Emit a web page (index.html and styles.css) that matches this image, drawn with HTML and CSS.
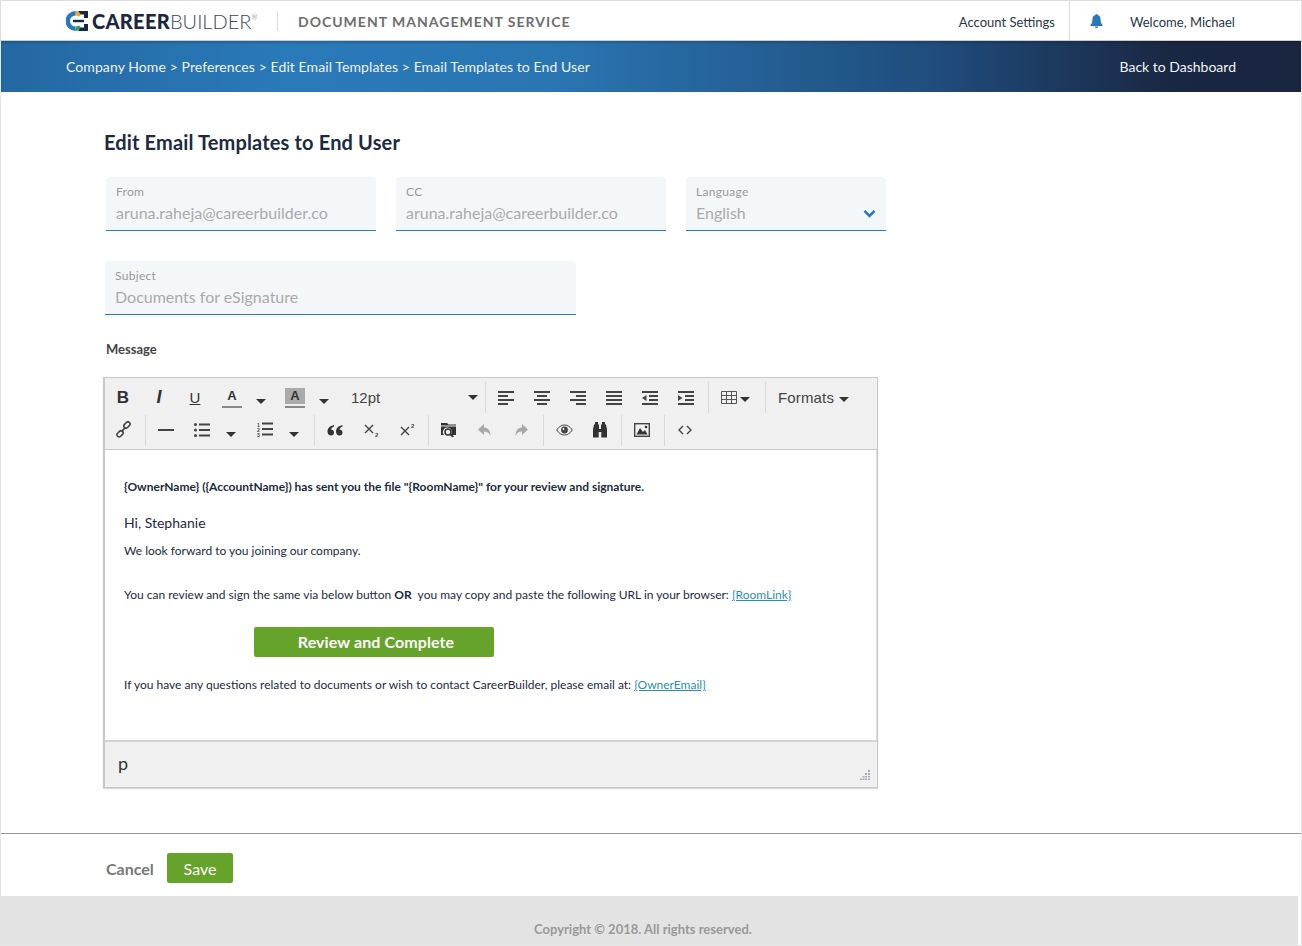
FILE: index.html
```html
<!DOCTYPE html>
<html lang="en">
<head>
  <meta charset="UTF-8" />
  <meta name="viewport" content="width=device-width, initial-scale=1.0"/>
  <title>Edit Email Templates to End User</title>
  <link rel="stylesheet" href="styles.css">
</head>
<body>
  <div class="page">
    <header class="topbar">
      <div class="logo">
        <svg class="logo-mark" width="22" height="20" viewBox="0 0 22 20">
          <path d="M9.500 0A10 10 0 0 1 16 2.500L13 5.500A5.500 5.500 0 0 0 9.500 4.500Z" fill="#f0a030"/>
          <path d="M9.500 0A10 10 0 0 0 9.500 20V15.500A5.500 5.500 0 0 1 9.500 4.500Z" fill="#2b78b8"/>
          <path d="M9.500 20A10 10 0 0 0 16 17.500L13 14.500A5.500 5.500 0 0 1 9.500 15.500Z" fill="#2f9c6b"/>
          <path d="M12 0H22V7H18V3.500H15ZM12 20H22V13H18V16.500H15Z" fill="#1a2740"/>
          <rect x="7" y="8.800" width="11" height="2.400" fill="#1a2740"/>
        </svg>
        <span class="logo-name"><b>CAREER</b>BUILDER<sup>®</sup></span>
      </div>
      <div class="service">DOCUMENT MANAGEMENT SERVICE</div>
      <a class="account" href="#">Account Settings</a>
      <div class="user">
        <svg class="bell" width="13" height="14" viewBox="0 0 13 14"><path d="M6.500 0a1 1 0 0 1 1 1.100C9.600 1.500 10.600 3.300 10.600 5.500c0 3 .8 4.300 2 5.500v.9H.4V11c1.200-1.200 2-2.500 2-5.500 0-2.200 1-4 3.100-4.400A1 1 0 0 1 6.500 0ZM4.800 12.500h3.400a1.700 1.500 0 0 1-3.400 0Z" fill="#2b78b8"/></svg>
        <span>Welcome, Michael</span>
      </div>
    </header>

    <nav class="crumbs">
      <div class="trail">Company Home &gt; Preferences &gt; Edit Email Templates &gt; Email Templates to End User</div>
      <a href="#">Back to Dashboard</a>
    </nav>

    <main class="content">
      <h1>Edit Email Templates to End User</h1>

      <div class="field-row">
        <div class="field field-from"><label>From</label><div class="value">aruna.raheja@careerbuilder.co</div></div>
        <div class="field field-from"><label>CC</label><div class="value">aruna.raheja@careerbuilder.co</div></div>
        <div class="field field-lang">
          <label>Language</label><div class="value">English</div>
          <svg class="chevron" width="13" height="9" viewBox="0 0 13 9"><path d="M1.500 1.800 6.500 6.800 11.500 1.800" fill="none" stroke="#2b78b8" stroke-width="2.600"/></svg>
        </div>
      </div>

      <div class="field field-subject"><label>Subject</label><div class="value">Documents for eSignature</div></div>

      <div class="message-label">Message</div>

      <div class="editor">
        <div class="toolbar">
          <div class="tool-row">
            <span class="tool tool-b">B</span>
            <span class="tool tool-i">I</span>
            <span class="tool tool-u">U</span>
            <span class="tool tool-color"><span class="color-a">A</span></span>
            <span class="tool-caret"><i class="caret"></i></span>
            <span class="tool tool-shift"><span class="color-a color-bg">A</span></span>
            <span class="tool-caret"><i class="caret"></i></span>
            <span class="font-size">12pt<i class="caret"></i></span>
            <i class="sep sep-font"></i>
            <span class="tool"><svg width="16" height="14" viewBox="0 0 16 14"><path d="M0 0h16v2H0zM0 4h10v2H0zM0 8h16v2H0zM0 12h10v2H0z" fill="#444"/></svg></span>
            <span class="tool"><svg width="16" height="14" viewBox="0 0 16 14"><path d="M0 0h16v2H0zM3 4h10v2H3zM0 8h16v2H0zM3 12h10v2H3z" fill="#444"/></svg></span>
            <span class="tool"><svg width="16" height="14" viewBox="0 0 16 14"><path d="M0 0h16v2H0zM6 4h10v2H6zM0 8h16v2H0zM6 12h10v2H6z" fill="#444"/></svg></span>
            <span class="tool"><svg width="16" height="14" viewBox="0 0 16 14"><path d="M0 0h16v2H0zM0 4h16v2H0zM0 8h16v2H0zM0 12h16v2H0z" fill="#444"/></svg></span>
            <span class="tool"><svg width="16" height="14" viewBox="0 0 16 14"><path d="M0 0h16v2H0zM7 4h9v2H7zM7 8h9v2H7zM0 12h16v2H0zM4.500 4v6L0 7Z" fill="#444"/></svg></span>
            <span class="tool"><svg width="16" height="14" viewBox="0 0 16 14"><path d="M0 0h16v2H0zM7 4h9v2H7zM7 8h9v2H7zM0 12h16v2H0zM0 4v6l4.500-3Z" fill="#444"/></svg></span>
            <i class="sep sep-table"></i>
            <span class="tool-table"><svg width="16" height="13" viewBox="0 0 16 13"><path d="M.5.500h15v12H.5zM.5 4.500h15M.5 8.500h15M5.500.500v12M10.500.500v12" fill="none" stroke="#555"/></svg><i class="caret"></i></span>
            <i class="sep"></i>
            <span class="formats">Formats<i class="caret"></i></span>
          </div>
          <div class="tool-row tool-row-low">
            <span class="tool"><svg width="17" height="17" viewBox="0 0 16 16"><g fill="none" stroke="#444" stroke-width="1.500"><rect x="8" y="1.800" width="6.500" height="4" rx="2" transform="rotate(-45 11.200 3.800)"/><rect x="1.500" y="10" width="6.500" height="4" rx="2" transform="rotate(-45 4.800 12)"/><path d="M6 10l4-4"/></g></svg></span>
            <i class="sep sep-low sep-link"></i>
            <span class="tool"><svg width="16" height="14" viewBox="0 0 16 14"><path d="M0 6h16v2H0z" fill="#444"/></svg></span>
            <span class="tool"><svg width="16" height="14" viewBox="0 0 16 14"><circle cx="1.500" cy="1.500" r="1.500" fill="#444"/><circle cx="1.500" cy="7" r="1.500" fill="#444"/><circle cx="1.500" cy="12.500" r="1.500" fill="#444"/><path d="M5 .500h11v2H5zM5 6h11v2H5zM5 11.500h11v2H5z" fill="#444"/></svg></span>
            <span class="tool-caret"><i class="caret"></i></span>
            <span class="tool tool-shift"><svg width="16" height="15" viewBox="0 0 16 15"><path d="M5 .500h11v2H5zM5 6h11v2H5zM5 11.500h11v2H5z" fill="#444"/><text class="ol-num" x="0" y="4.500">1</text><text class="ol-num" x="0" y="9.500">2</text><text class="ol-num" x="0" y="14.500">3</text></svg></span>
            <span class="tool-caret"><i class="caret"></i></span>
            <i class="sep sep-low sep-list"></i>
            <span class="tool"><svg width="16" height="12" viewBox="0 0 16 12"><path d="M7 1C3 2 .500 4 .500 7.500.500 10 2 11.500 4 11.500s3-1.400 3-3.100C7 6.500 5.500 5.500 4 5.500 4.300 4.200 5.500 3 7 2.500ZM15.500 1c-4 1-6.500 3-6.500 6.500C9 10 10.500 11.500 12.500 11.500s3-1.400 3-3.100c0-1.900-1.500-2.900-3-2.900.300-1.300 1.500-2.500 3-3Z" fill="#333"/></svg></span>
            <span class="tool"><svg width="15" height="14" viewBox="0 0 15 14"><path d="M1 2l8 8M9 2l-8 8" stroke="#444" stroke-width="1.400" fill="none"/><text class="script-num" x="11" y="14">2</text></svg></span>
            <span class="tool"><svg width="15" height="14" viewBox="0 0 15 14"><path d="M1 4l8 8M9 4l-8 8" stroke="#444" stroke-width="1.400" fill="none"/><text class="script-num" x="11" y="5">2</text></svg></span>
            <i class="sep sep-low"></i>
            <span class="tool"><svg width="16" height="15" viewBox="0 0 16 15"><path d="M0 3.500V1h6l1.500 1.500H15v1Z M0 4.500h15V13H9.800a4.500 4.500 0 0 0-3-7.500A4.500 4.500 0 0 0 3 13H0Z" fill="#333"/><circle cx="7" cy="10" r="3" fill="none" stroke="#333" stroke-width="1.500"/><path d="M9.200 12l3 3" stroke="#333" stroke-width="2"/></svg></span>
            <span class="tool"><svg width="14" height="14" viewBox="0 0 14 14"><path d="M6 1 0 6.500 6 12V8.500c3 0 5 1 6.500 4.500 0-5-2-8-6.500-8.500Z" fill="#a8a8a8"/></svg></span>
            <span class="tool"><svg width="14" height="14" viewBox="0 0 14 14"><path d="M8 1l6 5.500L8 12V8.500c-3 0-5 1-6.500 4.500 0-5 2-8 6.500-8.500Z" fill="#a8a8a8"/></svg></span>
            <i class="sep sep-low sep-wide"></i>
            <span class="tool"><svg width="17" height="12" viewBox="0 0 17 12"><path d="M.7 6C3 2.500 5.500 1 8.500 1s5.500 1.500 7.800 5c-2.300 3.500-4.800 5-7.800 5S3 9.500.7 6Z" fill="none" stroke="#444"/><circle cx="8.500" cy="6" r="3.400" fill="#444"/><circle cx="7.500" cy="5" r="1" fill="#efefef"/></svg></span>
            <span class="tool"><svg width="16" height="16" viewBox="0 0 16 16"><path d="M3 0h3v2.500h1V7h2V2.500h1V0h3v2.500h1l1 5V15.500H9.300V10H6.700v5.500H1V7.500l1-5h1Z" fill="#333"/></svg></span>
            <i class="sep sep-low"></i>
            <span class="tool"><svg width="16" height="14" viewBox="0 0 16 14"><rect x=".7" y=".7" width="14.600" height="12.600" fill="none" stroke="#444" stroke-width="1.400"/><path d="M2.500 11.500 6 5l3 4 2-2 2.500 4.500Z" fill="#333"/><circle cx="12" cy="4" r="1.300" fill="#333"/></svg></span>
            <i class="sep sep-low sep-wide"></i>
            <span class="tool"><svg width="14" height="10" viewBox="0 0 14 10"><path d="M5 1 1 5l4 4M9 1l4 4-4 4" fill="none" stroke="#444" stroke-width="1.400"/></svg></span>
          </div>
        </div>

        <div class="editor-body">
          <p class="line-lead"><b>{OwnerName} ({AccountName}) has sent you the file "{RoomName}" for your review and signature.</b></p>
          <p class="line-hi">Hi, Stephanie</p>
          <p class="line-forward">We look forward to you joining our company.</p>
          <p class="line-review">You can review and sign the same via below button <span class="or">OR</span>&nbsp; you may copy and paste the following URL in your browser: <a href="#">{RoomLink}</a></p>
          <a class="review-btn" href="#">Review and Complete</a>
          <p class="line-contact">If you have any questions related to documents or wish to contact CareerBuilder, please email at: <a href="#">{OwnerEmail}</a></p>
        </div>

        <div class="statusbar">
          <span>p</span>
          <svg class="grip" width="10" height="10" viewBox="0 0 10 10"><path d="M8 0h2v2H8zM5 3h2v2H5zM8 3h2v2H8zM2.500 6h2v1.500h-2zM5 6h2v1.500H5zM8 6h2v1.500H8zM0 8.500h2V10H0zM2.500 8.500h2V10h-2zM5 8.500h2V10H5zM8 8.500h2V10H8z" fill="#aab"/></svg>
        </div>
      </div>
    </main>

    <div class="actions">
      <a class="cancel" href="#">Cancel</a>
      <a class="save" href="#">Save</a>
    </div>

    <footer class="copyright">Copyright © 2018. All rights reserved.</footer>
  </div>
</body>
</html>
```

FILE: styles.css
```css
* {
  margin: 0;
  padding: 0;
  box-sizing: border-box;
}

html, body {
  height: 946px;
  overflow: hidden;
}

body {
  background-color: #e6e6e6;
  font-family: "Lato", sans-serif;
  color: #1c2a44;
}

a {
  text-decoration: none;
  color: inherit;
}

.page {
  width: 1300px;
  height: 945px;
  background: #fff;
  margin-left: 1px;
}

/* top bar */
.topbar {
  display: flex;
  align-items: center;
  height: 41px;
  margin-left: -1px;
  border-top: 1px solid #ddd;
  border-left: 1px solid #ddd;
  border-bottom: 1px solid #ccc;
  background: #fff;
}

.logo {
  display: flex;
  align-items: center;
  width: 211px;
  height: 20px;
  margin-left: 65px;
}

.logo-mark {
  flex: none;
  margin-right: 4px;
}

.logo-name {
  font-size: 20px;
  font-weight: 300;
  color: #3d4656;
  white-space: nowrap;
}

.logo-name b {
  font-weight: 900;
  color: #1a2740;
  letter-spacing: 0.3px;
}

.logo-name sup {
  font-size: 7px;
  vertical-align: 9px;
  line-height: 0;
}

.service {
  height: 20px;
  line-height: 22px;
  padding-left: 20px;
  border-left: 1px solid #ddd;
  font-size: 14px;
  font-weight: 700;
  letter-spacing: 1px;
  color: #6e6e6e;
}

.account {
  margin-left: auto;
  margin-top: 2px;
  padding-right: 14px;
  font-size: 13px;
  color: #2a3549;
}

.user {
  display: flex;
  align-items: center;
  align-self: stretch;
  width: 232px;
  padding-left: 20px;
  border-left: 1px solid #ddd;
  font-size: 13px;
  color: #2a3549;
}

.user span {
  margin-top: 2px;
}

.bell {
  margin-right: 27px;
}

/* breadcrumb */
.crumbs {
  display: flex;
  justify-content: space-between;
  align-items: center;
  height: 51px;
  padding: 0 65px 0 65px;
  background: linear-gradient(90deg, #2468a2 0, #2a79b9 22%, #2a76b3 42%, #1f4c7c 72%, #1a2742 90%, #1a2540 100%);
  box-shadow: inset 0 2px 2px rgba(0, 0, 0, 0.15);
  font-size: 14px;
  color: #eef3f8;
}

.trail {
  letter-spacing: 0.09px;
}

/* form */
.content {
  padding: 0 0 0 103px;
  height: 741px;
}

h1 {
  padding-top: 38px;
  height: 85px;
  font-size: 20px;
  line-height: 24px;
  font-weight: 700;
  letter-spacing: 0.15px;
  color: #1c2a44;
}

.field-row {
  display: flex;
  gap: 20px;
  padding-left: 2px;
  margin-bottom: 30px;
}

.field {
  position: relative;
  height: 54px;
  padding: 8px 10px 0;
  background: #f4f7fa;
  border-bottom: 1px solid #2a7abf;
  border-radius: 3px 3px 0 0;
}

.field label {
  display: block;
  height: 14px;
  font-size: 12px;
  line-height: 14px;
  letter-spacing: 0.3px;
  color: #999;
}

.field .value {
  margin-top: 3px;
  font-size: 16px;
  line-height: 22px;
  color: #aaa;
}

.field-from {
  width: 270px;
}

.field-lang {
  width: 200px;
}

.field-subject {
  width: 471px;
  margin-left: 1px;
}

.chevron {
  position: absolute;
  right: 10px;
  top: 32px;
}

.message-label {
  margin: 26px 0 0 2px;
  height: 36px;
  font-size: 13px;
  line-height: 16px;
  font-weight: 700;
  color: #444;
}

/* editor */
.editor {
  width: 775px;
  margin-left: -1px;
  border: 1px solid #c8c8c8;
  box-shadow: 0 1px 1px rgba(0, 0, 0, 0.15);
  border-left-width: 2px;
  background: #fff;
}

.toolbar {
  height: 72px;
  padding-top: 3px;
  background: #f0f0f0;
  border-bottom: 1px solid #c8c8c8;
}

.tool-row {
  display: flex;
  align-items: center;
  height: 33px;
}

.tool {
  display: flex;
  align-items: center;
  justify-content: center;
  flex: none;
  width: 36px;
  height: 32px;
  font-family: "Liberation Sans", sans-serif;
  color: #333;
}

.tool-row-low .tool {
  padding-bottom: 2px;
}

.tool-b {
  font-size: 17px;
  font-weight: 700;
}

.tool-i {
  font-size: 18px;
  font-weight: 700;
  font-style: italic;
}

.tool-u {
  font-size: 15px;
  text-decoration: underline;
}

.tool-color {
  margin-left: 1px;
}

.tool-shift {
  margin-left: 5px;
}

.color-a {
  width: 20px;
  height: 20px;
  border-bottom: 2px solid #888;
  font-size: 13px;
  line-height: 16px;
  font-weight: 700;
  text-align: center;
}

.color-bg {
  background: linear-gradient(#aaa 0, #aaa 16px, transparent 16px);
}

.tool-caret {
  display: flex;
  justify-content: center;
  flex: none;
  width: 22px;
  padding-top: 7px;
}

.caret {
  display: inline-block;
  width: 0;
  height: 0;
  border-left: 5px solid transparent;
  border-right: 5px solid transparent;
  border-top: 5px solid #333;
}

.font-size {
  display: flex;
  align-items: center;
  justify-content: space-between;
  flex: none;
  width: 145px;
  margin-left: 5px;
  padding: 0 7px 0 11px;
  font-family: "Liberation Sans", sans-serif;
  font-size: 15px;
  color: #444;
}

.sep {
  flex: none;
  width: 1px;
  height: 31px;
  background: #d9d9d9;
}

.sep-font {
  margin-right: 2px;
}

.sep-table {
  margin-left: 4px;
}

.sep-low {
  margin: 0 2px 0 3px;
}

.sep-wide {
  margin-left: 4px;
}

.sep-link {
  margin-left: 4px;
}

.sep-list {
  margin-left: 9px;
}

.tool-table {
  display: flex;
  align-items: center;
  flex: none;
  width: 56px;
  padding-left: 12px;
}

.tool-table .caret {
  margin: 4px 0 0 3px;
}

.formats {
  display: flex;
  align-items: center;
  padding-left: 12px;
  font-family: "Liberation Sans", sans-serif;
  font-size: 15px;
  letter-spacing: 0.15px;
  color: #444;
}

.formats .caret {
  margin: 4px 0 0 5px;
}

.ol-num {
  font-family: "Liberation Sans", sans-serif;
  font-size: 5px;
  font-weight: 700;
  fill: #444;
}

.script-num {
  font-family: "Liberation Sans", sans-serif;
  font-size: 6px;
  font-weight: 700;
  fill: #444;
}

.editor-body {
  height: 290px;
  padding: 29px 19px 0;
  font-size: 12px;
  line-height: 16px;
  color: #1c2a44;
  border-right: 1px solid #ddd;
}

.editor-body p {
  white-space: nowrap;
}

.editor-body a:not(.review-btn) {
  color: #2b8fb0;
  text-decoration: underline;
}

.line-hi {
  margin-top: 19px;
  font-size: 14px;
  line-height: 18px;
}

.line-forward {
  margin-top: 11px;
}

.line-review {
  margin-top: 28px;
}

.or {
  font-weight: 700;
}

.review-btn {
  display: block;
  width: 240px;
  height: 30px;
  margin: 24px 0 20px 130px;
  padding-left: 4px;
  background: #65a32a;
  border-radius: 2px;
  font-size: 16px;
  line-height: 30px;
  font-weight: 700;
  letter-spacing: 0.1px;
  text-align: center;
  color: #fff;
}

.statusbar {
  position: relative;
  height: 47px;
  padding: 10px 13px 0;
  background: #f0f0f0;
  border-top: 2px solid #d4d4d4;
  font-size: 18px;
  line-height: 22px;
  color: #333;
}

.grip {
  position: absolute;
  right: 7px;
  bottom: 7px;
}

/* bottom */
.actions {
  display: flex;
  align-items: center;
  height: 63px;
  padding: 6px 0 0 105px;
  border-top: 1px solid #999;
}

.cancel {
  width: 61px;
  font-size: 16px;
  font-weight: 700;
  color: #777;
}

.save {
  width: 66px;
  height: 30px;
  background: #65a32a;
  border-radius: 2px;
  font-size: 16px;
  line-height: 32px;
  text-align: center;
  color: #fff;
}

.copyright {
  height: 49px;
  width: 1298px;
  margin-left: -1px;
  padding: 25px 0 0 534px;
  background: #e3e3e3;
  font-size: 13px;
  line-height: 16px;
  font-weight: 700;
  color: #999;
}
```
